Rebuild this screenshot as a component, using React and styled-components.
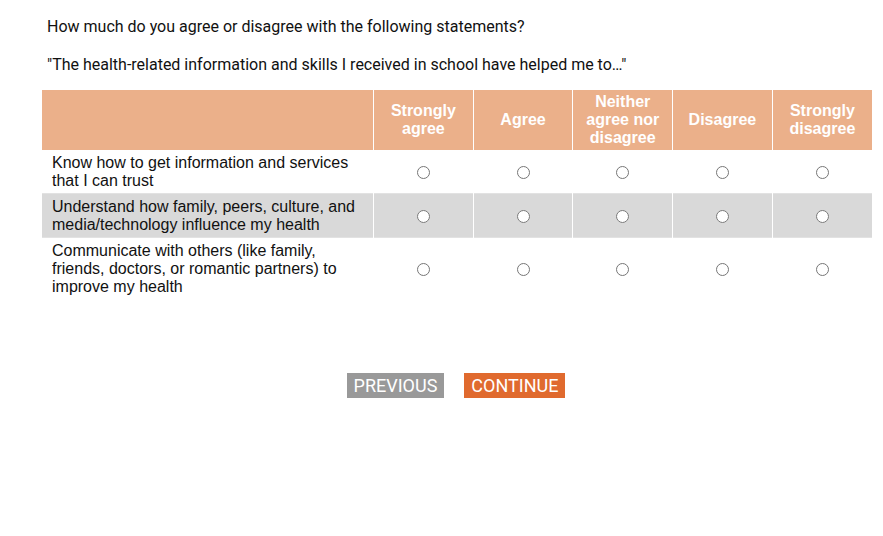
import React from 'react';
import styled, { createGlobalStyle } from 'styled-components';

const GlobalStyle = createGlobalStyle`
  body {
    margin: 0;
    background: #fff;
    font-family: Roboto, "Liberation Sans", sans-serif;
  }
`;

const Page = styled.div`
  width: 883px;
  padding: 16px 11px 0 42px;
  box-sizing: border-box;
`;

const Prompt = styled.p`
  margin: 0 0 ${({ $gap }) => $gap}px 5px;
  font-family: Roboto, sans-serif;
  font-size: 16px;
  font-weight: 400;
  line-height: 22px;
  color: #111;
`;

const Grid = styled.table`
  width: 830px;
  table-layout: fixed;
  border-collapse: collapse;
  font-family: "Liberation Sans", Arial, sans-serif;
  font-size: 16px;
`;

const HeadCell = styled.th`
  background: #ebb08a;
  color: #fff;
  font-weight: bold;
  font-size: 16px;
  line-height: 18px;
  height: 60px;
  padding: 0 4px;
  width: ${({ $first }) => ($first ? '323px' : 'auto')};
  border-left: ${({ $first }) => ($first ? 'none' : '1px solid #fff')};
  text-align: center;
`;

const Row = styled.tr`
  background: ${({ $shaded }) => ($shaded ? '#d9d9d9' : '#fff')};
  border-bottom: 1px solid #e2e2e2;

  &:last-child {
    border-bottom: none;
  }
`;

const Statement = styled.td`
  padding: 4px 10px 3px;
  line-height: 18px;
  color: #111;
  height: ${({ $h }) => $h}px;
  box-sizing: border-box;
`;

const Choice = styled.td`
  text-align: center;
  vertical-align: middle;
  border-left: 1px solid #fff;
`;

const Radio = styled.input`
  margin: 0;
  width: 13px;
  height: 13px;
  vertical-align: middle;
`;

const Nav = styled.div`
  display: flex;
  justify-content: center;
  gap: 20px;
  width: 828px;
  margin-top: 74px;
`;

const NavButton = styled.button`
  border: none;
  padding: 0 7px;
  height: 25px;
  font-family: Roboto, sans-serif;
  font-size: 18px;
  color: #fff;
  background: ${({ $primary }) => ($primary ? '#e06a2e' : '#999999')};
  cursor: pointer;
`;

const options = ['Strongly agree', 'Agree', 'Neither agree nor disagree', 'Disagree', 'Strongly disagree'];

const statements = [
  { text: 'Know how to get information and services that I can trust', h: 43 },
  { text: 'Understand how family, peers, culture, and media/technology influence my health', h: 42 },
  { text: 'Communicate with others (like family, friends, doctors, or romantic partners) to improve my health', h: 61 },
];

const App = () => (
  <Page>
    <GlobalStyle />
    <Prompt $gap={16}>How much do you agree or disagree with the following statements?</Prompt>
    <Prompt $gap={14}>"The health-related information and skills I received in school have helped me to…"</Prompt>
    <Grid>
      <thead>
        <tr>
          <HeadCell $first />
          {options.map(o => (
            <HeadCell key={o}>{o}</HeadCell>
          ))}
        </tr>
      </thead>
      <tbody>
        {statements.map((s, i) => (
          <Row key={i} $shaded={i === 1}>
            <Statement $h={s.h}>{s.text}</Statement>
            {options.map(o => (
              <Choice key={o}>
                <Radio type="radio" name={`q${i}`} aria-label={o} />
              </Choice>
            ))}
          </Row>
        ))}
      </tbody>
    </Grid>
    <Nav>
      <NavButton>PREVIOUS</NavButton>
      <NavButton $primary>CONTINUE</NavButton>
    </Nav>
  </Page>
);

export default App;
